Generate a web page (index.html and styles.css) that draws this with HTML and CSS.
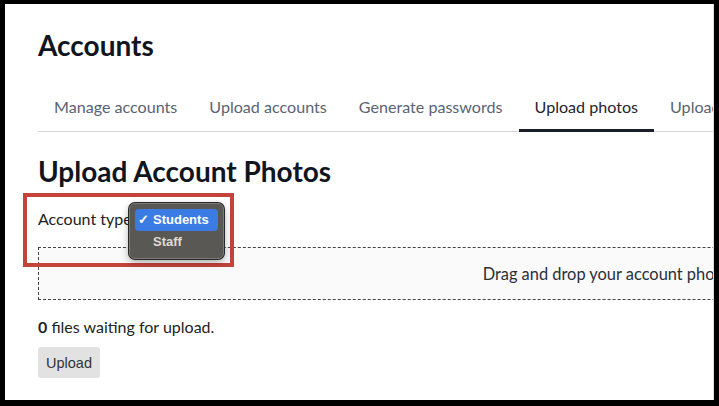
FILE: index.html
```html
<!DOCTYPE html>
<html lang="en">
<head>
<meta charset="utf-8">
<title>Accounts – Upload photos</title>
<link rel="stylesheet" href="styles.css">
</head>
<body>
<div class="screen">
  <div class="content">
    <h1 class="page-title">Accounts</h1>
    <nav class="tabs">
      <a class="tab">Manage accounts</a>
      <a class="tab">Upload accounts</a>
      <a class="tab">Generate passwords</a>
      <a class="tab active">Upload photos</a>
      <a class="tab">Upload staff</a>
    </nav>
    <h2 class="section-title">Upload Account Photos</h2>
    <div class="field-row">
      <label class="field-label">Account type</label>
    </div>
    <div class="dropzone">Drag and drop your account photos here, or click to select files</div>
    <p class="status"><b>0</b> files waiting for upload.</p>
    <button class="btn">Upload</button>

    <div class="highlight"></div>
    <div class="menu">
      <div class="menu-item selected"><span class="check">✓</span>Students</div>
      <div class="menu-item"><span class="check"></span>Staff</div>
    </div>
  </div>
</div>
</body>
</html>
```
FILE: styles.css
```css
html, body {
  margin: 0;
  padding: 0;
  background: #000;
}
.screen {
  margin: 4px 5px 6px 5px;
  height: 396px;
  background: #fff;
  overflow: hidden;
  border-right: 1px solid #dcdcdc;
  box-sizing: border-box;
}
.content {
  position: relative;
  width: 1337px;
  padding: 24px 0 0 33px;
  font-family: "Lato", "Noto Sans", sans-serif;
  color: #1f2430;
}
.page-title {
  margin: 0;
  font-size: 28px;
  line-height: 34px;
  font-weight: 700;
  color: #111520;
}
.tabs {
  display: flex;
  margin-top: 33px;
  border-bottom: 1px solid #d6d6d6;
}
.tab {
  padding: 0 16px 13px;
  margin-bottom: -1px;
  font-size: 16.1px;
  line-height: 24px;
  color: #5a6373;
  white-space: nowrap;
}
.tab.active {
  color: #1f2430;
  box-shadow: inset 0 -3px 0 #1a1e2a;
}
.section-title {
  margin: 22px 0 0;
  font-size: 28px;
  line-height: 34px;
  font-weight: 700;
  color: #111520;
}
.field-row {
  margin-top: 19px;
  height: 24px;
}
.field-label {
  font-size: 16px;
  line-height: 24px;
  color: #222;
}
.dropzone {
  margin-top: 16px;
  border: 1px dashed #444;
  background: #fafafa;
  padding: 14px 0 13px;
  text-align: center;
  font-size: 16.4px;
  line-height: 24px;
  color: #2a2f3a;
  white-space: nowrap;
}
.status {
  margin: 15px 0 0;
  font-size: 16px;
  line-height: 24px;
  color: #222;
}
.status b {
  font-weight: 700;
}
.btn {
  margin-top: 8px;
  height: 31px;
  padding: 0 8px;
  border: none;
  border-radius: 3px;
  background: #e2e2e2;
  font-family: "Liberation Sans", Arial, sans-serif;
  font-size: 14.5px;
  color: #333;
}
.highlight {
  position: absolute;
  left: 18px;
  top: 189px;
  width: 203px;
  height: 66px;
  border: 4px solid #c4433b;
}
.menu {
  position: absolute;
  left: 124px;
  top: 199px;
  width: 95px;
  height: 56px;
  box-sizing: border-box;
  padding: 5px 5px 0;
  background: #5a5854;
  border: 1px solid #7d7a75;
  border-radius: 6px;
  box-shadow: 0 0 0 1px #2a2927, 0 3px 8px rgba(0,0,0,0.35);
  font-family: "Liberation Sans", Arial, sans-serif;
  font-size: 13px;
  font-weight: 700;
}
.menu-item {
  height: 22px;
  line-height: 22px;
  padding-left: 3px;
  border-radius: 4px;
  color: #dedbd6;
  white-space: nowrap;
}
.menu-item.selected {
  background: #3a7ce3;
  color: #fff;
}
.check {
  display: inline-block;
  width: 15px;
}
```
